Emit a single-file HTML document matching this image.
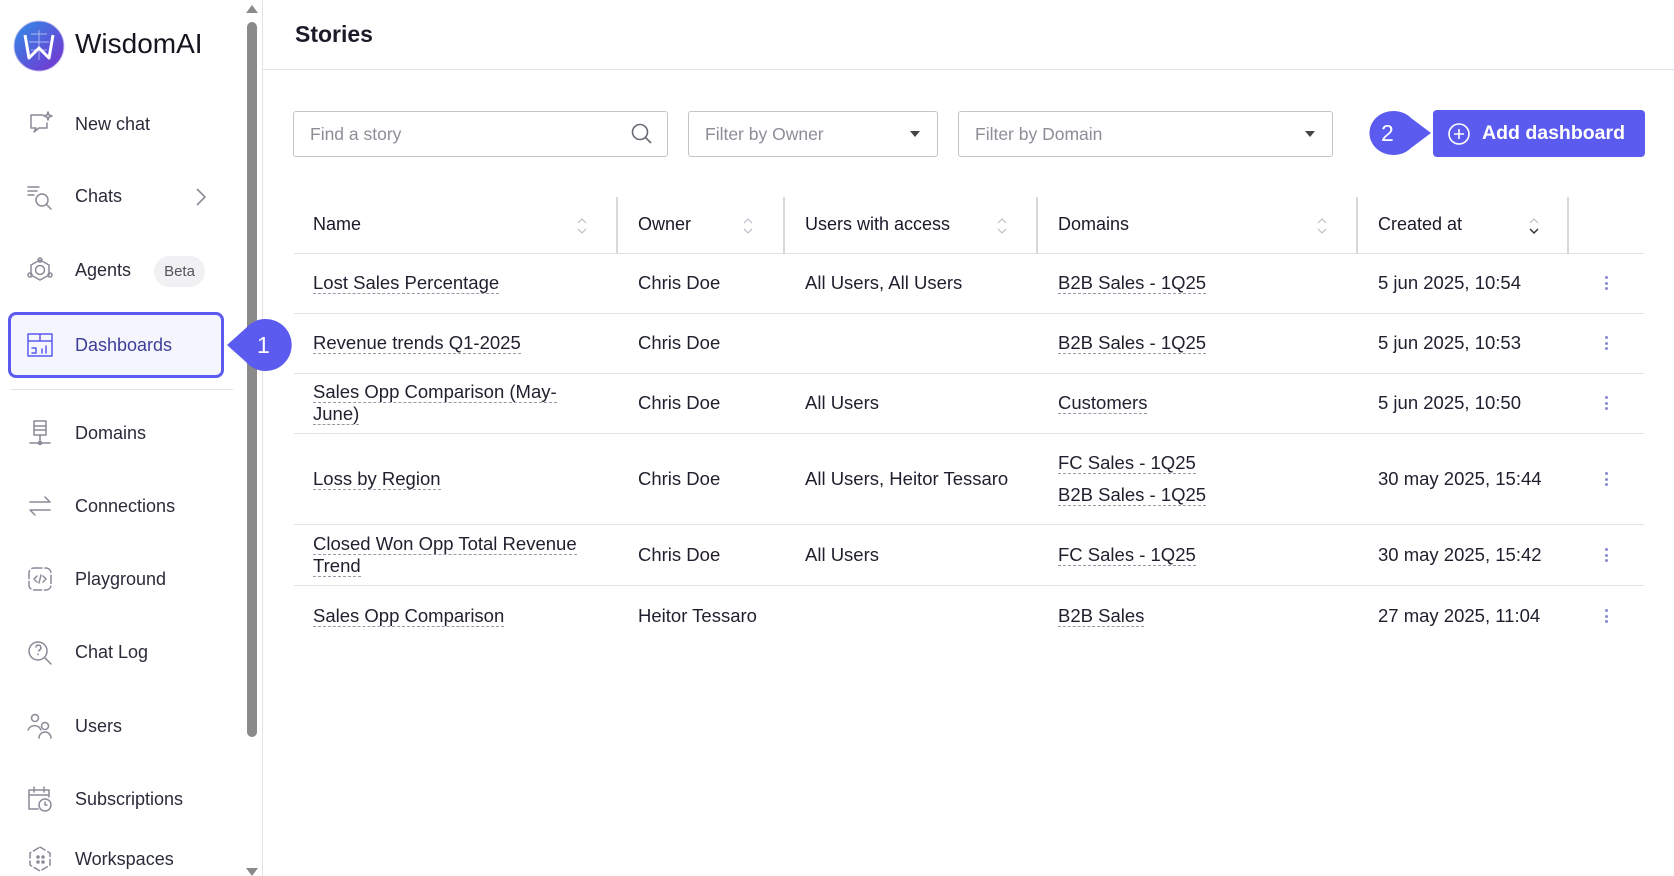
<!DOCTYPE html>
<html><head><meta charset="utf-8"><style>
*{box-sizing:border-box;margin:0;padding:0}
body{width:1674px;height:876px;overflow:hidden;background:#fff;font-family:"Liberation Sans",sans-serif;color:#1f1f2e;position:relative}
.abs{position:absolute}
.nav{position:absolute;left:26px;height:30px;display:flex;align-items:center;font-size:18px;color:#2b2b3a}
.nav svg{width:28px;height:28px;margin-right:21px;fill:none;stroke:#8a8a98;stroke-width:1.5;stroke-linecap:round;stroke-linejoin:round}
.box{position:absolute;top:111px;height:46px;border:1px solid #c4c4cc;border-radius:3px;font-size:17.5px;color:#8d8d97;padding-left:16px;display:flex;align-items:center}
.th{position:absolute;top:214px;font-size:18px;color:#1a1a28}
.sep{position:absolute;top:197px;height:56px;width:2px;background:#d8d8dc}
.hl{position:absolute;left:294px;width:1350px;height:1px;background:#e2e2e6}
.c{position:absolute;font-size:18.5px;color:#1f1f2e;line-height:22px}
.u{border-bottom:1px dashed #9a9aa6}
.dots{position:absolute;left:1605px;width:3px}
.dots i{display:block;width:3px;height:3px;border-radius:50%;background:#8a8ad0;margin-bottom:2.5px}
.sort{position:absolute;top:216px;width:12px;height:20px}
</style></head><body>
<svg class="abs" style="left:13px;top:20px" width="52" height="52" viewBox="0 0 52 52"><defs><linearGradient id="g" x1="0" y1="0" x2="1" y2="1"><stop offset="0" stop-color="#2f8de8"/><stop offset="1" stop-color="#7a2fd0"/></linearGradient></defs><circle cx="26" cy="26" r="25" fill="url(#g)" stroke="#c8c4f0" stroke-width="1"/><path d="M12 15 L16 38 L26 28 L36 38 L40 15" fill="none" stroke="#fff" stroke-width="3" stroke-linejoin="round"/><path d="M18 14 L34 14 M16 22 L36 22 M18 30 L34 30 M26 10 L26 40" stroke="#fff" stroke-width="0.7" opacity=".7"/></svg>
<div class="abs" style="left:75px;top:28px;font-size:28px;color:#15151f">WisdomAI</div>
<div class="abs" style="left:247px;top:22px;width:10px;height:715px;background:#8a8a8a;border-radius:5px"></div>
<div class="abs" style="left:246px;top:5px;width:0;height:0;border-left:6px solid transparent;border-right:6px solid transparent;border-bottom:8px solid #8a8a8a"></div>
<div class="abs" style="left:246px;top:868px;width:0;height:0;border-left:6px solid transparent;border-right:6px solid transparent;border-top:8px solid #8a8a8a"></div>
<div class="abs" style="left:262px;top:0;width:1px;height:876px;background:#e2e2e6"></div>

<div class="nav" style="top:109px"><svg viewBox="0 0 28 28"><path d="M17 5H5v13h5l-2 4 5-4h8v-5"/><path d="M22 2l1 3 3 1-3 1-1 3-1-3-3-1 3-1z"/></svg>New chat</div>
<div class="nav" style="top:181px"><svg viewBox="0 0 28 28"><path d="M2 5h11M2 9h9M2 13h6"/><circle cx="16" cy="18" r="6"/><path d="M20.5 22.5L25 27"/></svg>Chats</div>
<svg class="abs" style="left:195px;top:187px" width="12" height="20" viewBox="0 0 12 20"><path d="M2 2l8 8-8 8" fill="none" stroke="#8a8a98" stroke-width="1.6"/></svg>
<div class="nav" style="top:255px"><svg viewBox="0 0 28 28"><path d="M14 4l9 5v10l-9 5-9-5V9z"/><circle cx="14" cy="14" r="4.5"/><circle cx="14" cy="4" r="2"/><circle cx="4" cy="19" r="2"/><circle cx="24" cy="19" r="2"/></svg>Agents</div>
<div class="abs" style="left:154px;top:256px;width:51px;height:31px;border-radius:16px;background:#f1f1f3;font-size:15px;color:#55555f;text-align:center;line-height:31px">Beta</div>
<div class="abs" style="left:8px;top:312px;width:216px;height:66px;border:3.5px solid #5b5bf0;border-radius:8px;background:#f5f5fd"></div>
<div class="nav" style="top:330px;color:#3e3e9a"><svg viewBox="0 0 28 28" style="stroke:#5b5bf0"><rect x="2" y="3" width="24" height="22"/><path d="M2 10h24M14 3v7M6 17h4v5H6M16 18v4M20 15v7"/></svg>Dashboards</div>
<div class="abs" style="left:11px;top:389px;width:222px;height:1px;background:#e2e2e6"></div>
<div class="nav" style="top:418px"><svg viewBox="0 0 28 28"><rect x="8" y="2" width="12" height="14"/><path d="M8 7h12M8 11h12M14 16v6M4 24h20"/><circle cx="14" cy="24" r="1.5"/></svg>Domains</div>
<div class="nav" style="top:491px"><svg viewBox="0 0 28 28"><path d="M4 10h20l-5-5M24 18H4l5 5"/></svg>Connections</div>
<div class="nav" style="top:564px"><svg viewBox="0 0 28 28"><rect x="3" y="3" width="22" height="22" rx="5" stroke-dasharray="8 3"/><path d="M11 11l-3 3 3 3M17 11l3 3-3 3M15 10l-2 8"/></svg>Playground</div>
<div class="nav" style="top:637px"><svg viewBox="0 0 28 28"><circle cx="12" cy="13" r="9"/><path d="M18.5 19.5L25 26M10 9a2.5 2.5 0 1 1 3 3v1M12 16v.5"/></svg>Chat Log</div>
<div class="nav" style="top:711px"><svg viewBox="0 0 28 28"><circle cx="9" cy="6" r="3.5"/><path d="M2 18a7 7 0 0 1 13 0"/><circle cx="19" cy="14" r="3.5"/><path d="M13 26a6 6 0 0 1 12 0"/></svg>Users</div>
<div class="nav" style="top:784px"><svg viewBox="0 0 28 28"><path d="M12 24H3V5h20v7M3 10h20M8 2v5M18 2v5"/><circle cx="19" cy="20" r="6"/><path d="M19 17v3h2"/></svg>Subscriptions</div>
<div class="nav" style="top:844px"><svg viewBox="0 0 28 28"><path d="M14 2l10 6v12l-10 6-10-6V8z" stroke-dasharray="6 3"/><circle cx="12" cy="12" r="1" fill="#8a8a98"/><circle cx="17" cy="12" r="1" fill="#8a8a98"/><circle cx="12" cy="17" r="1" fill="#8a8a98"/><circle cx="17" cy="17" r="1" fill="#8a8a98"/></svg>Workspaces</div>

<svg class="abs" style="left:226px;top:318px" width="66" height="54" viewBox="0 0 66 54"><path d="M1 27 L20 10 A26 26 0 1 1 20 44 Z" fill="#5b5bf0"/></svg>
<div class="abs" style="left:257px;top:332px;font-size:23px;color:#fff">1</div>

<div class="abs" style="left:295px;top:21px;font-size:23px;font-weight:bold;color:#1a1a28">Stories</div>
<div class="abs" style="left:263px;top:69px;width:1411px;height:1px;background:#e2e2e6"></div>

<div class="box" style="left:293px;width:375px">Find a story</div>
<svg class="abs" style="left:630px;top:122px" width="24" height="24" viewBox="0 0 24 24"><circle cx="10" cy="10" r="7.5" fill="none" stroke="#6a6a74" stroke-width="1.6"/><path d="M15.5 15.5L21 21" stroke="#6a6a74" stroke-width="1.6"/></svg>
<div class="box" style="left:688px;width:250px">Filter by Owner</div>
<div class="abs" style="left:910px;top:131px;border-left:5px solid transparent;border-right:5px solid transparent;border-top:6px solid #444"></div>
<div class="box" style="left:958px;width:375px">Filter by Domain</div>
<div class="abs" style="left:1305px;top:131px;border-left:5px solid transparent;border-right:5px solid transparent;border-top:6px solid #444"></div>

<svg class="abs" style="left:1363px;top:109px" width="70" height="48" viewBox="0 0 70 48"><path d="M68 24 L48 9 A24 22 0 1 0 48 39 Z" fill="#5b5bf0"/></svg>
<div class="abs" style="left:1381px;top:120px;font-size:23px;color:#fff">2</div>
<div class="abs" style="left:1433px;top:110px;width:212px;height:47px;background:#5b5bf0;border-radius:4px;color:#fff;font-size:19.5px;font-weight:bold;display:flex;align-items:center;padding-left:14px">
<svg width="24" height="24" viewBox="0 0 24 24" style="margin-right:11px"><circle cx="12" cy="12" r="10" fill="none" stroke="#fff" stroke-width="1.6"/><path d="M12 7v10M7 12h10" stroke="#fff" stroke-width="1.6"/></svg>Add dashboard</div>

<div class="th" style="left:313px">Name</div>
<div class="th" style="left:638px">Owner</div>
<div class="th" style="left:805px">Users with access</div>
<div class="th" style="left:1058px">Domains</div>
<div class="th" style="left:1378px">Created at</div>
<div class="sep" style="left:616px"></div><div class="sep" style="left:783px"></div><div class="sep" style="left:1036px"></div><div class="sep" style="left:1356px"></div><div class="sep" style="left:1567px"></div>
<svg class="sort" style="left:576px" viewBox="0 0 12 20"><path d="M2 7l4-4 4 4M2 13l4 4 4-4" fill="none" stroke="#c4c4cc" stroke-width="1.3"/></svg>
<svg class="sort" style="left:742px" viewBox="0 0 12 20"><path d="M2 7l4-4 4 4M2 13l4 4 4-4" fill="none" stroke="#c4c4cc" stroke-width="1.3"/></svg>
<svg class="sort" style="left:996px" viewBox="0 0 12 20"><path d="M2 7l4-4 4 4M2 13l4 4 4-4" fill="none" stroke="#c4c4cc" stroke-width="1.3"/></svg>
<svg class="sort" style="left:1316px" viewBox="0 0 12 20"><path d="M2 7l4-4 4 4M2 13l4 4 4-4" fill="none" stroke="#c4c4cc" stroke-width="1.3"/></svg>
<svg class="sort" style="left:1528px" viewBox="0 0 12 20"><path d="M2 7l4-4 4 4" fill="none" stroke="#c4c4cc" stroke-width="1.3"/><path d="M2 13l4 4 4-4" fill="none" stroke="#333" stroke-width="1.5"/></svg>
<div class="hl" style="top:253px"></div>
<div class="hl" style="top:313px"></div>
<div class="hl" style="top:373px"></div>
<div class="hl" style="top:433px"></div>
<div class="hl" style="top:524px"></div>
<div class="hl" style="top:585px"></div>

<div class="c" style="left:313px;top:272px"><span class="u">Lost Sales Percentage</span></div>
<div class="c" style="left:638px;top:272px">Chris Doe</div>
<div class="c" style="left:805px;top:272px">All Users, All Users</div>
<div class="c" style="left:1058px;top:272px"><span class="u">B2B Sales - 1Q25</span></div>
<div class="c" style="left:1378px;top:272px">5 jun 2025, 10:54</div>
<div class="dots" style="top:276px"><i></i><i></i><i></i></div>

<div class="c" style="left:313px;top:332px"><span class="u">Revenue trends Q1-2025</span></div>
<div class="c" style="left:638px;top:332px">Chris Doe</div>
<div class="c" style="left:1058px;top:332px"><span class="u">B2B Sales - 1Q25</span></div>
<div class="c" style="left:1378px;top:332px">5 jun 2025, 10:53</div>
<div class="dots" style="top:336px"><i></i><i></i><i></i></div>

<div class="c" style="left:313px;top:381px;width:280px"><span class="u">Sales Opp Comparison (May-</span><br><span class="u">June)</span></div>
<div class="c" style="left:638px;top:392px">Chris Doe</div>
<div class="c" style="left:805px;top:392px">All Users</div>
<div class="c" style="left:1058px;top:392px"><span class="u">Customers</span></div>
<div class="c" style="left:1378px;top:392px">5 jun 2025, 10:50</div>
<div class="dots" style="top:396px"><i></i><i></i><i></i></div>

<div class="c" style="left:313px;top:468px"><span class="u">Loss by Region</span></div>
<div class="c" style="left:638px;top:468px">Chris Doe</div>
<div class="c" style="left:805px;top:468px">All Users, Heitor Tessaro</div>
<div class="c" style="left:1058px;top:452px"><span class="u">FC Sales - 1Q25</span></div>
<div class="c" style="left:1058px;top:484px"><span class="u">B2B Sales - 1Q25</span></div>
<div class="c" style="left:1378px;top:468px">30 may 2025, 15:44</div>
<div class="dots" style="top:472px"><i></i><i></i><i></i></div>

<div class="c" style="left:313px;top:533px;width:300px"><span class="u">Closed Won Opp Total Revenue</span><br><span class="u">Trend</span></div>
<div class="c" style="left:638px;top:544px">Chris Doe</div>
<div class="c" style="left:805px;top:544px">All Users</div>
<div class="c" style="left:1058px;top:544px"><span class="u">FC Sales - 1Q25</span></div>
<div class="c" style="left:1378px;top:544px">30 may 2025, 15:42</div>
<div class="dots" style="top:548px"><i></i><i></i><i></i></div>

<div class="c" style="left:313px;top:605px"><span class="u">Sales Opp Comparison</span></div>
<div class="c" style="left:638px;top:605px">Heitor Tessaro</div>
<div class="c" style="left:1058px;top:605px"><span class="u">B2B Sales</span></div>
<div class="c" style="left:1378px;top:605px">27 may 2025, 11:04</div>
<div class="dots" style="top:609px"><i></i><i></i><i></i></div>
</body></html>
